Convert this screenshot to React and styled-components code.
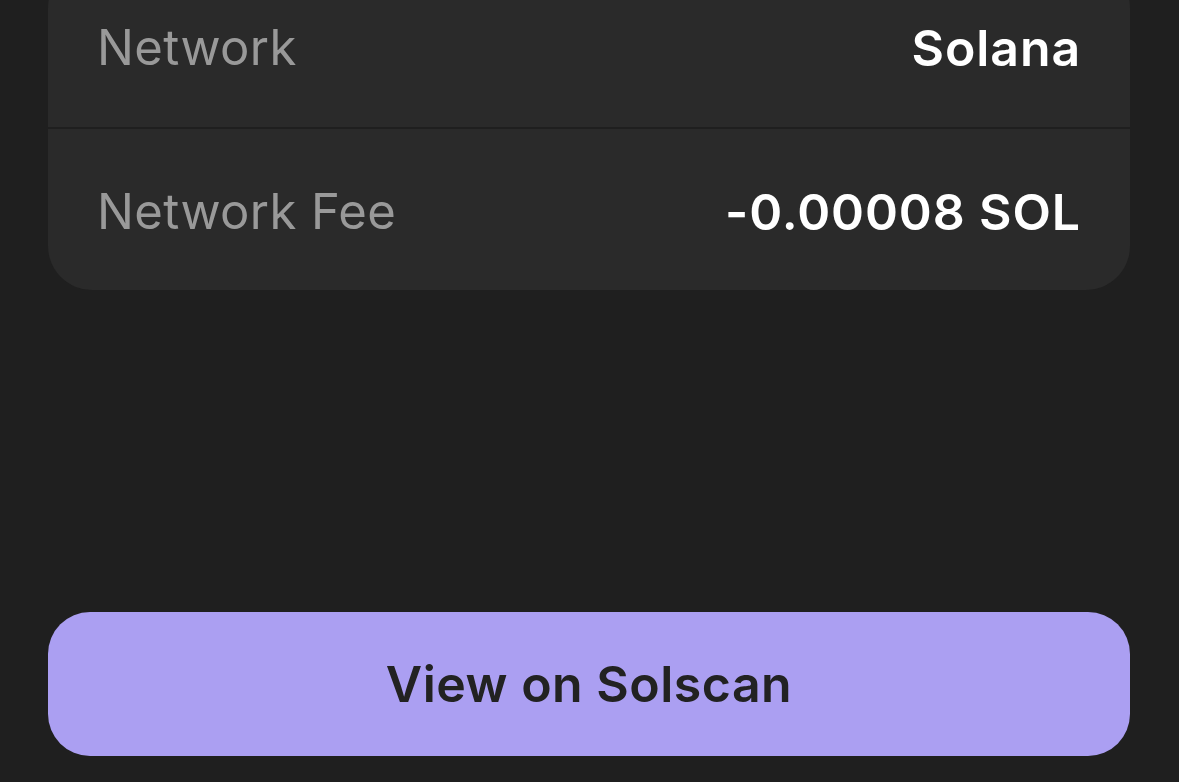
import React from "react";
import styled, { createGlobalStyle } from "styled-components";

const GlobalStyle = createGlobalStyle`
  html, body {
    margin: 0;
    padding: 0;
    background: #1f1f1f;
  }
  body {
    font-family: Inter, "Noto Sans", "Liberation Sans", sans-serif;
    -webkit-font-smoothing: antialiased;
  }
`;

const Screen = styled.div`
  height: 782px;
  overflow: hidden;
  display: flex;
  flex-direction: column;
  padding: 0 49px 26px 48px;
  box-sizing: border-box;
`;

const Card = styled.div`
  margin-top: -36px;
  background: #2a2a2a;
  border-radius: 44px;
  display: flex;
  flex-direction: column;
`;

const Row = styled.div`
  height: 163px;
  display: flex;
  align-items: center;
  justify-content: space-between;
  padding: 4px 49px 0 49px;
  border-top: ${(p) => (p.first ? "none" : "2px solid #1f1f1f")};
  box-sizing: border-box;
`;

const Label = styled.span`
  font-size: 49px;
  font-weight: 400;
  color: #999999;
  letter-spacing: 0.4px;
`;

const Value = styled.span`
  font-size: 50px;
  font-weight: 600;
  color: #ffffff;
  letter-spacing: 0.9px;
`;

const Spacer = styled.div`
  flex: 1;
`;

const Button = styled.button`
  height: 144px;
  border: none;
  border-radius: 42px;
  background: #ab9ff2;
  color: #222222;
  font-family: inherit;
  font-size: 50px;
  font-weight: 600;
  letter-spacing: 0.5px;
  cursor: pointer;
`;

const details = [
  { label: "Network", value: "Solana" },
  { label: "Network Fee", value: "-0.00008 SOL" },
];

const App = () => (
  <>
    <GlobalStyle />
    <Screen>
      <Card>
        {details.map((d, i) => (
          <Row key={d.label} first={i === 0}>
            <Label>{d.label}</Label>
            <Value>{d.value}</Value>
          </Row>
        ))}
      </Card>
      <Spacer />
      <Button>View on Solscan</Button>
    </Screen>
  </>
);

export default App;
